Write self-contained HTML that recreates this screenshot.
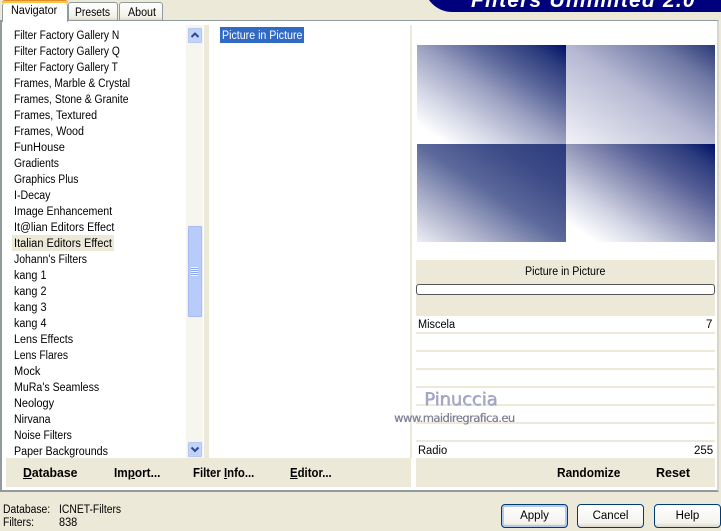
<!DOCTYPE html>
<html><head><meta charset="utf-8"><style>
html,body{margin:0;padding:0}
body{width:721px;height:527px;overflow:hidden;background:#ece9d8;position:relative;font-family:"Liberation Sans",sans-serif;font-size:11.5px;color:#000}
div{position:absolute;box-sizing:border-box}
.t{white-space:nowrap;line-height:16px;height:16px;margin-top:1px;transform:scaleX(var(--s,.91));transform-origin:0 0;left:14px}
.b{font-weight:bold;font-size:12.5px;white-space:nowrap;line-height:16px;top:465px;transform:scaleX(var(--s,1));transform-origin:0 0}
.line{left:416px;width:299px;height:2px;background:#ece9d8}
.btn{top:504px;width:67px;height:24px;border:1px solid #003c74;border-radius:4px;background:linear-gradient(#fff,#f4f3ee 80%,#dcd8cc);text-align:center;line-height:22px;font-size:11.5px}
.sb{left:187px;width:16px;height:17px;background:#c1d3fb;border:1px solid #eef2fd;border-radius:2px;box-shadow:0 0 0 1px #b9c8ec inset}
</style></head><body>
<div style="left:0;top:20px;width:719px;height:472px;background:#fff;border:2px solid #919b9c;border-width:1px 2px 2px 2px;border-color:#919b9c #d8d6cc #919b9c #919b9c"></div>
<div style="left:6px;top:458px;width:405px;height:29px;background:#ece9d8"></div>
<div style="left:416px;top:458px;width:299px;height:29px;background:#ece9d8"></div>
<div style="left:186px;top:25px;width:17px;height:433px;background:#f6f5ee"></div>
<div style="left:204px;top:25px;width:5px;height:433px;background:#ece9d8"></div>
<div style="left:410px;top:25px;width:2px;height:433px;background:#ece9d8"></div>
<div style="left:2px;top:3px;width:66px;height:19px;background:#fff;border:1px solid #919b9c;border-top:none;border-bottom:none;border-radius:3px 3px 0 0"></div>
<div style="left:2px;top:0;width:66px;height:3px;background:#ffc73c;border-top:1px solid #e68b2c;border-radius:3px 3px 0 0"></div>
<div class="t" style="left:11px;top:2px;--s:.94">Navigator</div>
<div style="left:68px;top:2px;width:50px;height:18px;background:linear-gradient(#fff,#f0efe6 85%,#dcd9ca);border:1px solid #919b9c;border-bottom:none;border-radius:3px 3px 0 0"></div>
<div class="t" style="left:75px;top:4px;--s:.9">Presets</div>
<div style="left:119px;top:2px;width:44px;height:18px;background:linear-gradient(#fff,#f0efe6 85%,#dcd9ca);border:1px solid #919b9c;border-bottom:none;border-radius:3px 3px 0 0"></div>
<div class="t" style="left:128px;top:4px;--s:.93">About</div>
<div style="left:424px;top:-20px;width:297px;height:32px;background:#00007f;border-radius:0 0 0 28px"></div>
<div style="left:471px;top:-9px;font:italic bold 21px/20px 'Liberation Sans',sans-serif;color:#fff;white-space:nowrap;letter-spacing:1.2px">Filters Unlimited 2.0</div>
<div style="left:12px;top:235px;width:102px;height:16px;background:#ece9d8"></div>
<div class="t" style="top:27px;--s:.89">Filter Factory Gallery N</div>
<div class="t" style="top:43px;--s:.89">Filter Factory Gallery Q</div>
<div class="t" style="top:59px;--s:.89">Filter Factory Gallery T</div>
<div class="t" style="top:75px;--s:.89">Frames, Marble &amp; Crystal</div>
<div class="t" style="top:91px;--s:.9">Frames, Stone &amp; Granite</div>
<div class="t" style="top:107px;--s:.93">Frames, Textured</div>
<div class="t" style="top:123px;--s:.93">Frames, Wood</div>
<div class="t" style="top:139px;--s:.96">FunHouse</div>
<div class="t" style="top:155px;--s:.9">Gradients</div>
<div class="t" style="top:171px;--s:.9">Graphics Plus</div>
<div class="t" style="top:187px;--s:.92">I-Decay</div>
<div class="t" style="top:203px;--s:.925">Image Enhancement</div>
<div class="t" style="top:219px;--s:.935">It@lian Editors Effect</div>
<div class="t" style="top:235px;--s:.96">Italian Editors Effect</div>
<div class="t" style="top:251px;--s:.91">Johann's Filters</div>
<div class="t" style="top:267px;--s:.94">kang 1</div>
<div class="t" style="top:283px;--s:.94">kang 2</div>
<div class="t" style="top:299px;--s:.94">kang 3</div>
<div class="t" style="top:315px;--s:.94">kang 4</div>
<div class="t" style="top:331px;--s:.937">Lens Effects</div>
<div class="t" style="top:347px;--s:.9">Lens Flares</div>
<div class="t" style="top:363px;--s:.96">Mock</div>
<div class="t" style="top:379px;--s:.923">MuRa's Seamless</div>
<div class="t" style="top:395px;--s:.95">Neology</div>
<div class="t" style="top:411px;--s:.92">Nirvana</div>
<div class="t" style="top:427px;--s:.906">Noise Filters</div>
<div class="t" style="top:443px;--s:.93">Paper Backgrounds</div>
<div class="sb" style="top:27px"><svg width="14" height="15" style="position:absolute;left:0;top:0"><path d="M3.500 9l3.500-3.500L10.500 9" fill="none" stroke="#2a4a8c" stroke-width="2"/></svg></div>
<div class="sb" style="top:441px"><svg width="14" height="15" style="position:absolute;left:0;top:0"><path d="M3.500 5.500L7 9l3.500-3.500" fill="none" stroke="#2a4a8c" stroke-width="2"/></svg></div>
<div style="left:187px;top:225px;width:16px;height:93px;background:#b9cbfa;border:1px solid #eef2fd;border-radius:2px;box-shadow:0 0 0 1px #a6bcf2 inset"></div>
<div style="left:191px;top:267px;width:7px;height:9px;background:repeating-linear-gradient(#f2f5fe 0,#f2f5fe 1px,#8aa6ec 1px,#8aa6ec 2px)"></div>
<div style="left:220px;top:27px;width:84px;height:16px;background:#316ac5"></div>
<div class="t" style="left:222px;top:27px;color:#fff;--s:.925">Picture in Picture</div>
<div style="left:417px;top:45px;width:149px;height:99px;background:linear-gradient(to top right,#fff 10%,#d0d3e3 30%,#9ca2c2 50%,#5a669a 70%,#2a3a7c 88%,#00106a 100%)"></div>
<div style="left:566px;top:45px;width:149px;height:99px;background:linear-gradient(to top right,#f2f2f8 0%,#b5b8d2 50%,#7079a4 80%,#2a3a78 100%)"></div>
<div style="left:417px;top:144px;width:149px;height:98px;background:linear-gradient(to top right,#eeeef5 0%,#a9aec8 25%,#5c699b 50%,#3d4b88 75%,#2a3a7c 100%)"></div>
<div style="left:566px;top:144px;width:149px;height:98px;background:linear-gradient(to top right,#fff 10%,#cfd2e2 30%,#9398ba 50%,#565f96 70%,#2a3a7c 88%,#00106a 100%)"></div>
<div style="left:416px;top:260px;width:299px;height:56px;background:#ece9d8"></div>
<div class="t" style="left:525px;top:263px;--s:.925">Picture in Picture</div>
<div style="left:416px;top:284px;width:299px;height:11px;background:#fff;border:1px solid #555;border-radius:3px"></div>
<div class="line" style="top:332px"></div><div class="line" style="top:350px"></div><div class="line" style="top:368px"></div><div class="line" style="top:386px"></div><div class="line" style="top:404px"></div><div class="line" style="top:422px"></div><div class="line" style="top:440px"></div>
<div class="t" style="left:418px;top:316px;--s:.95">Miscela</div>
<div class="t" style="left:706px;top:316px;--s:1">7</div>
<div class="t" style="left:418px;top:442px;--s:.97">Radio</div>
<div class="t" style="left:694px;top:442px;--s:1">255</div>
<div style="left:424px;top:389px;font:18px/22px 'DejaVu Sans',sans-serif;color:#a6a8c8;white-space:nowrap;letter-spacing:-.1px;text-shadow:.6px .6px 0 #9a9cbc">Pinuccia</div>
<div style="left:394px;top:411px;font:11.500px/14px 'DejaVu Sans',sans-serif;color:#7e7e94;white-space:nowrap;letter-spacing:-.55px;text-shadow:.4px 0 0 #9a9aac">www.maidiregrafica.eu</div>
<div class="b" style="left:23px;--s:.98"><u>D</u>atabase</div>
<div class="b" style="left:114px;--s:.94">Im<u>p</u>ort...</div>
<div class="b" style="left:193px;--s:.91">Filter <u>I</u>nfo...</div>
<div class="b" style="left:290px;--s:.91"><u>E</u>ditor...</div>
<div class="b" style="left:557px;--s:.95">Randomize</div>
<div class="b" style="left:656px">Reset</div>
<div class="t" style="left:3px;top:501px;--s:.9">Database:</div>
<div class="t" style="left:59px;top:501px;--s:.9">ICNET-Filters</div>
<div class="t" style="left:3px;top:514px;--s:.9">Filters:</div>
<div class="t" style="left:59px;top:514px;--s:.95">838</div>
<div class="btn" style="left:501px;box-shadow:inset 0 0 0 2px #b4c8ef">Apply</div>
<div class="btn" style="left:577px">Cancel</div>
<div class="btn" style="left:654px">Help</div>
</body></html>
